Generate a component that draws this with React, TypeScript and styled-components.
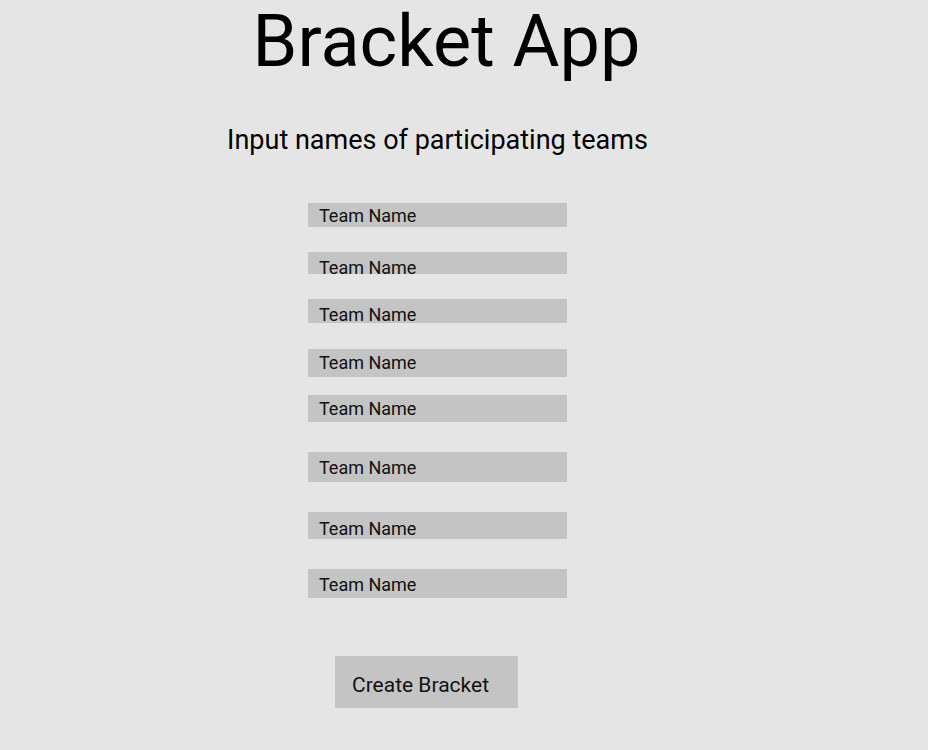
import React from "react";
import styled, { createGlobalStyle } from "styled-components";

const GlobalStyle = createGlobalStyle`
    html, body {
        margin: 0;
        padding: 0;
        background: #e5e5e5;
    }
    body {
        font-family: Roboto, "Liberation Sans", sans-serif;
        color: #000;
    }
`;

const Page = styled.main`
    width: 875px;
    min-height: 750px;
    display: flex;
    flex-direction: column;
    align-items: center;
`;

const Title = styled.h1`
    margin: 0 0 0 18px;
    font-size: 72px;
    font-weight: 400;
    line-height: 84px;
`;

const Subtitle = styled.h2`
    margin: 40px 0 0;
    font-size: 27px;
    font-weight: 400;
    line-height: 32px;
`;

const TeamList = styled.div`
    margin-top: 47px;
    display: flex;
    flex-direction: column;
`;

const TeamInput = styled.input<{ $height: number; $top: number; $bottom: number; $gap: number }>`
    box-sizing: border-box;
    width: 259px;
    height: ${(p) => p.$height}px;
    margin-top: ${(p) => p.$gap}px;
    padding: ${(p) => p.$top}px 0 ${(p) => p.$bottom}px 11px;
    border: none;
    outline: none;
    background: #c4c4c4;
    font-family: Roboto, "Liberation Sans", sans-serif;
    font-size: 18px;
    color: #111;
    &::placeholder {
        color: #111;
        opacity: 1;
    }
`;

const CreateButton = styled.button`
    margin: 58px 22px 0 0;
    width: 183px;
    height: 52px;
    padding: 6px 0 0 17px;
    text-align: left;
    border: none;
    background: #c4c4c4;
    font-family: Roboto, "Liberation Sans", sans-serif;
    font-size: 21px;
    color: #111;
    cursor: pointer;
`;

const teams = [
    { height: 24, top: 0, bottom: 0, gap: 0 },
    { height: 22, top: 8, bottom: 0, gap: 25 },
    { height: 24, top: 6, bottom: 0, gap: 25 },
    { height: 28, top: 0, bottom: 2, gap: 26 },
    { height: 27, top: 0, bottom: 0, gap: 18 },
    { height: 30, top: 0, bottom: 0, gap: 30 },
    { height: 27, top: 6, bottom: 0, gap: 30 },
    { height: 29, top: 2, bottom: 0, gap: 30 },
];

const App = () => {
    return (
        <Page>
            <GlobalStyle />
            <Title>Bracket App</Title>
            <Subtitle>Input names of participating teams</Subtitle>
            <TeamList>
                {teams.map((t, i) => (
                    <TeamInput
                        key={i}
                        $height={t.height}
                        $top={t.top}
                        $bottom={t.bottom}
                        $gap={t.gap}
                        placeholder="Team Name"
                    />
                ))}
            </TeamList>
            <CreateButton>Create Bracket</CreateButton>
        </Page>
    );
};

export default App;
